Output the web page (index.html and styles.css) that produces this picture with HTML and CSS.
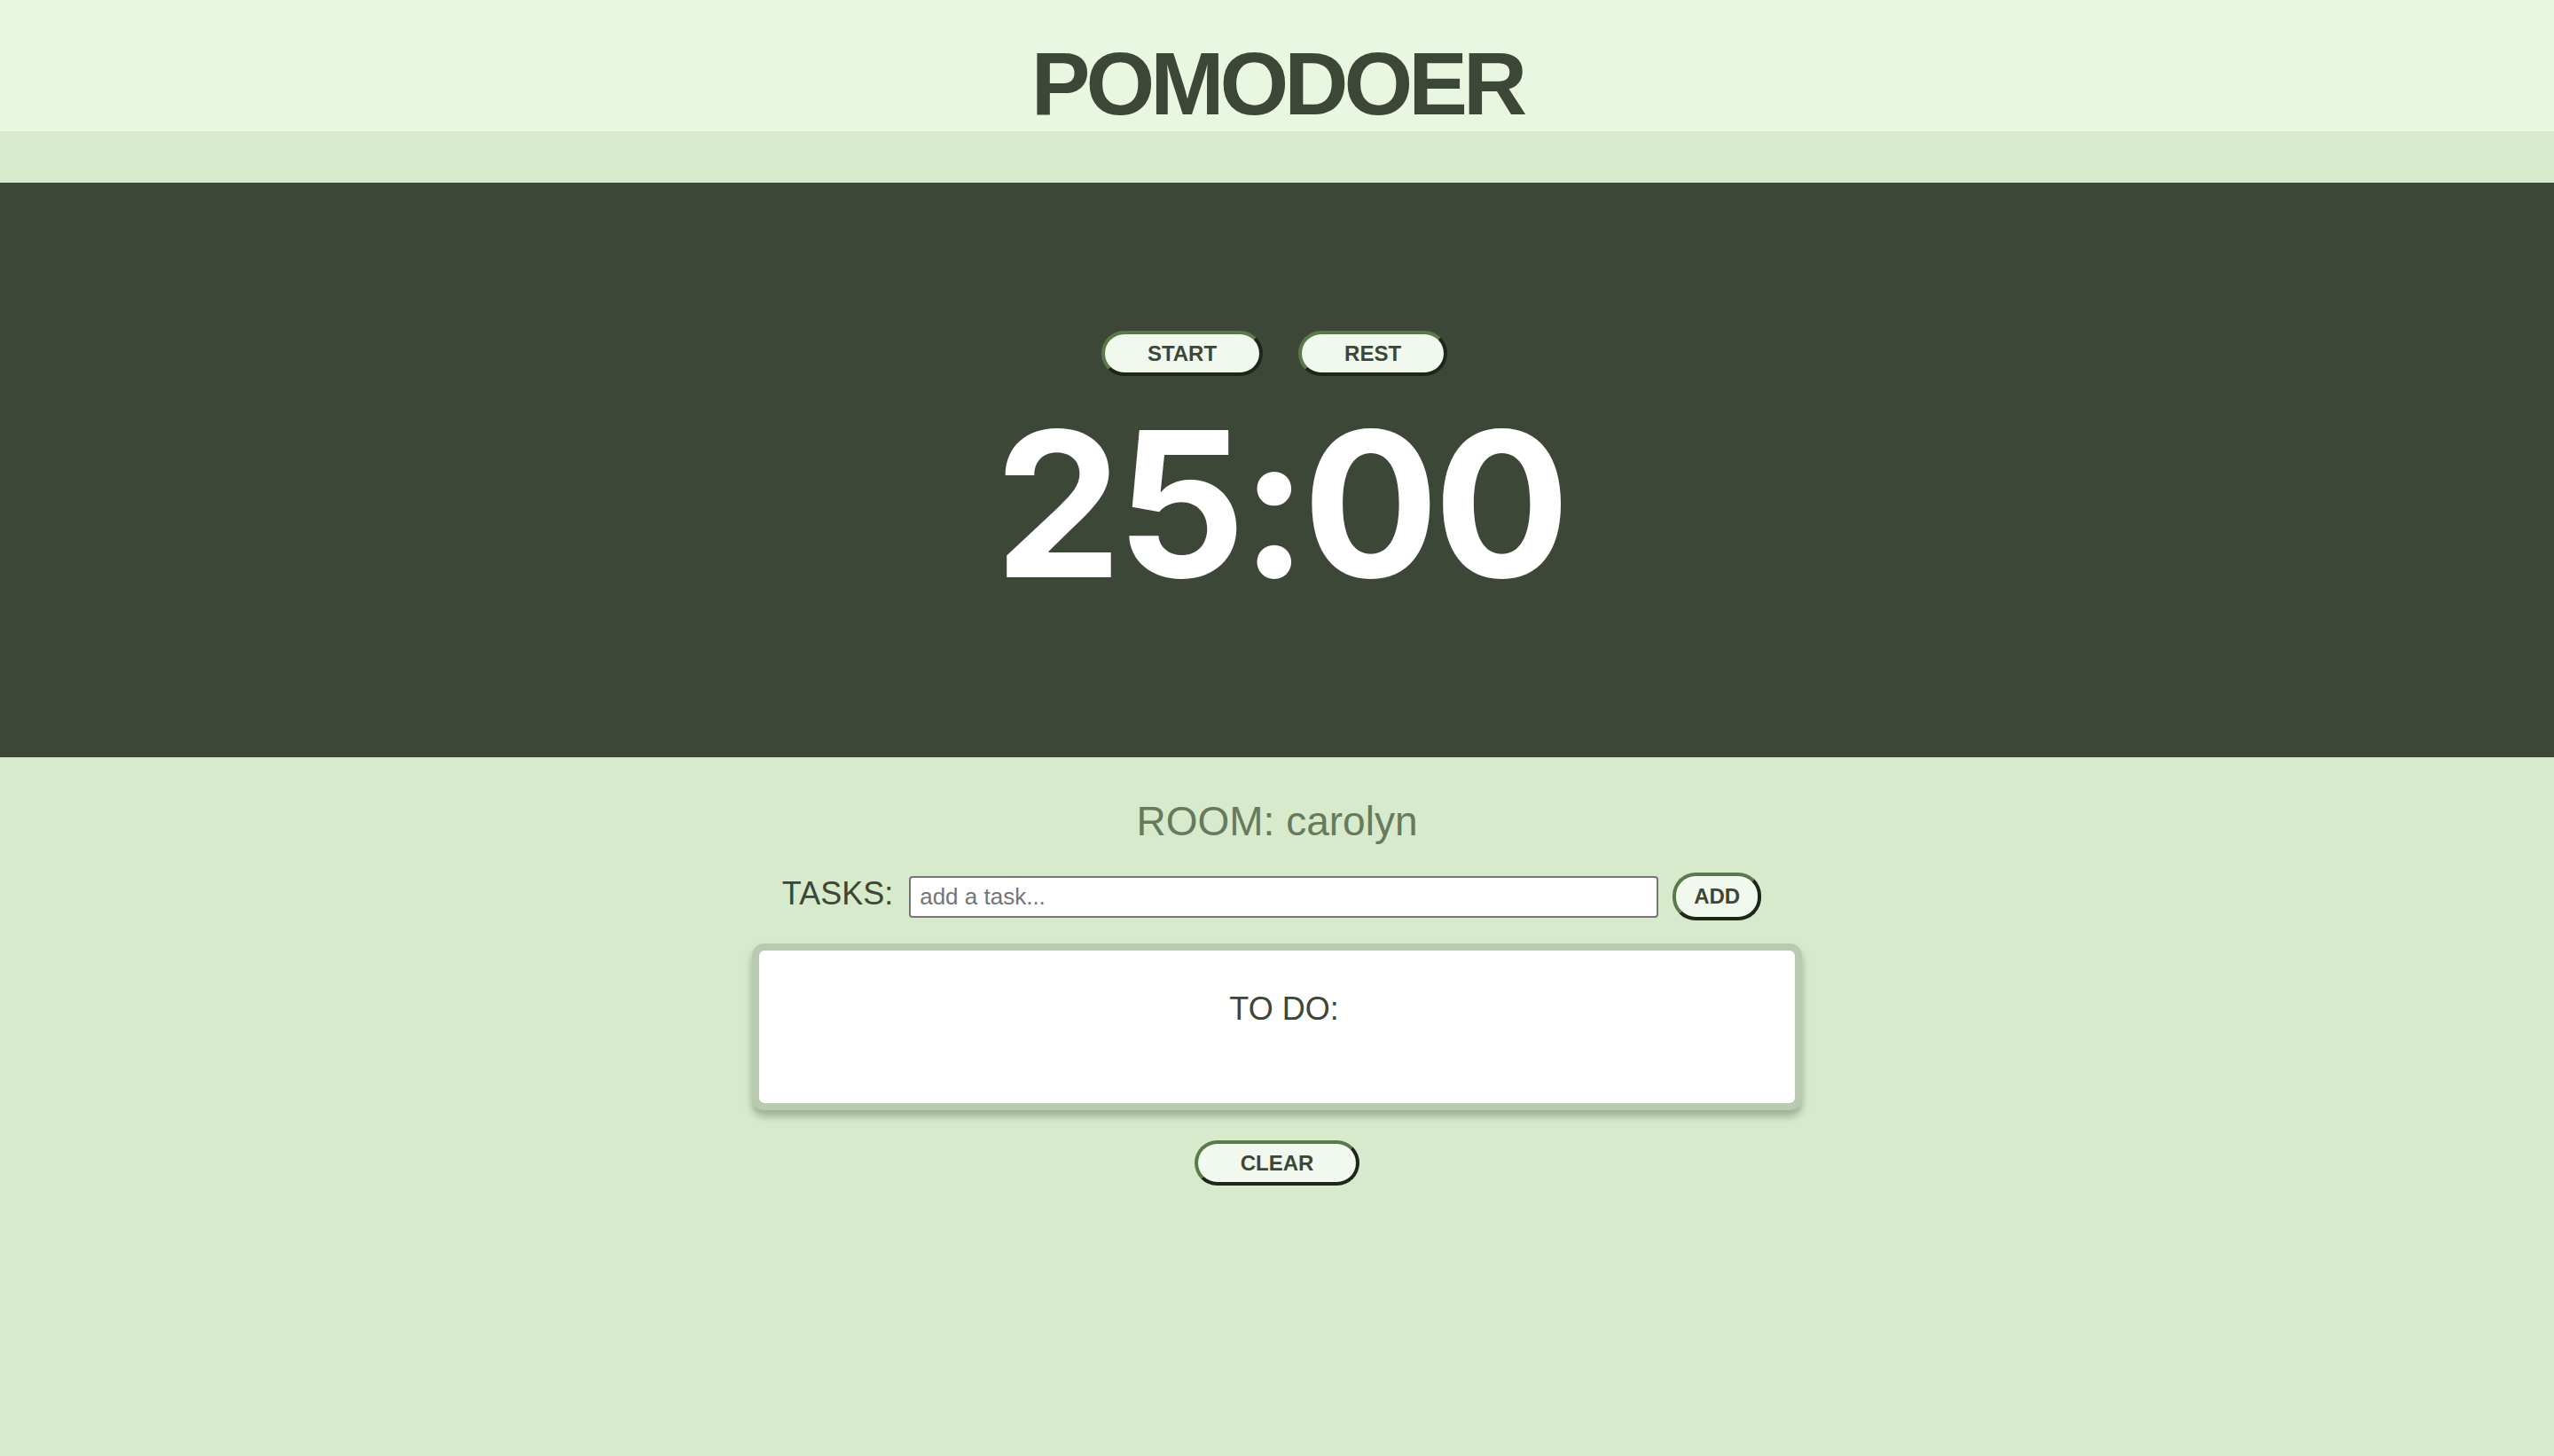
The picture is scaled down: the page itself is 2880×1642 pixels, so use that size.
FILE: index.html
```html
<!DOCTYPE html>
<html lang="en">
<head>
<meta charset="utf-8">
<title>Pomodoer</title>
<link rel="stylesheet" href="styles.css">
</head>
<body>
  <header class="site-header">
    <h1 class="logo">POMODOER</h1>
  </header>
  <section class="timer-panel">
    <div class="timer-controls">
      <button class="pill-btn">START</button>
      <button class="pill-btn">REST</button>
    </div>
    <div class="timer-display">25:00</div>
  </section>
  <main class="room">
    <h2 class="room-title">ROOM: carolyn</h2>
    <form class="task-form">
      <label class="task-label" for="task">TASKS:</label>
      <input class="task-input" id="task" type="text" placeholder="add a task...">
      <button class="pill-btn pill-btn--small" type="button">ADD</button>
    </form>
    <div class="todo-card">
      <div class="todo-inner">
        <h3 class="todo-title">TO DO:</h3>
      </div>
    </div>
    <button class="pill-btn clear-btn" type="button">CLEAR</button>
  </main>
</body>
</html>
```
FILE: styles.css
```css
* { box-sizing: border-box; }

html, body {
  margin: 0;
  padding: 0;
}

body {
  background: #d7eacc;
  font-family: "Liberation Sans", Arial, sans-serif;
  color: #3c4737;
  min-height: 1642px;
}

.site-header {
  background: #eaf7e0;
  height: 148px;
  padding-top: 44px;
  text-align: center;
}

.logo {
  margin: 0;
  font-family: "Liberation Sans", Arial, sans-serif;
  font-weight: 700;
  font-size: 100px;
  line-height: 1;
  letter-spacing: -5px;
  color: #3c4737;
}

.timer-panel {
  margin-top: 58px;
  background: #3c4737;
  height: 648px;
  padding-top: 167px;
  display: flex;
  flex-direction: column;
  align-items: center;
}

.timer-controls {
  display: flex;
  gap: 40px;
  margin-left: -6px;
}

.pill-btn {
  height: 51px;
  padding: 0 48px;
  background: #f1f8ee;
  color: #3c4737;
  font-family: "Liberation Sans", Arial, sans-serif;
  font-weight: 700;
  font-size: 24px;
  line-height: 1;
  border-width: 4px;
  border-style: solid;
  border-color: #5b7a4b #1d2619 #1d2619 #5b7a4b;
  border-radius: 26px;
  cursor: pointer;
}

.pill-btn--small {
  height: 54px;
  padding: 0 20px;
}

.timer-display {
  margin-top: 30px;
  font-family: Inter, "Liberation Sans", sans-serif;
  font-weight: 700;
  font-size: 228px;
  line-height: 1;
  letter-spacing: -6px;
  padding-left: 6px;
  color: #ffffff;
}

.room {
  display: flex;
  flex-direction: column;
  align-items: center;
}

.room-title {
  margin: 49px 0 0;
  font-weight: 400;
  font-size: 46px;
  line-height: 1;
  color: #687a5d;
}

.task-form {
  margin-top: 35px;
  display: flex;
  align-items: center;
  margin-left: -12px;
}

.task-label {
  font-size: 36px;
  color: #3c4737;
  margin-right: 18px;
  margin-top: -6px;
}

.task-input {
  width: 845px;
  height: 47px;
  border: 2px solid #767676;
  border-radius: 4px;
  background: #ffffff;
  padding: 0 10px;
  font-family: "Liberation Sans", Arial, sans-serif;
  font-size: 26px;
  color: #3c4737;
  margin-right: 16px;
}

.task-input::placeholder {
  color: #757575;
}

.todo-card {
  margin-top: 26px;
  width: 1184px;
  border: 8px solid #b8cbb0;
  border-radius: 14px;
  background: #ffffff;
  box-shadow: 0 7px 8px rgba(70, 90, 60, 0.4);
}

.todo-inner {
  min-height: 172px;
  padding-top: 48px;
  padding-left: 16px;
  text-align: center;
}

.todo-title {
  margin: 0;
  font-weight: 400;
  font-size: 36px;
  line-height: 1;
  color: #3c4737;
}

.clear-btn {
  margin-top: 34px;
}
```
